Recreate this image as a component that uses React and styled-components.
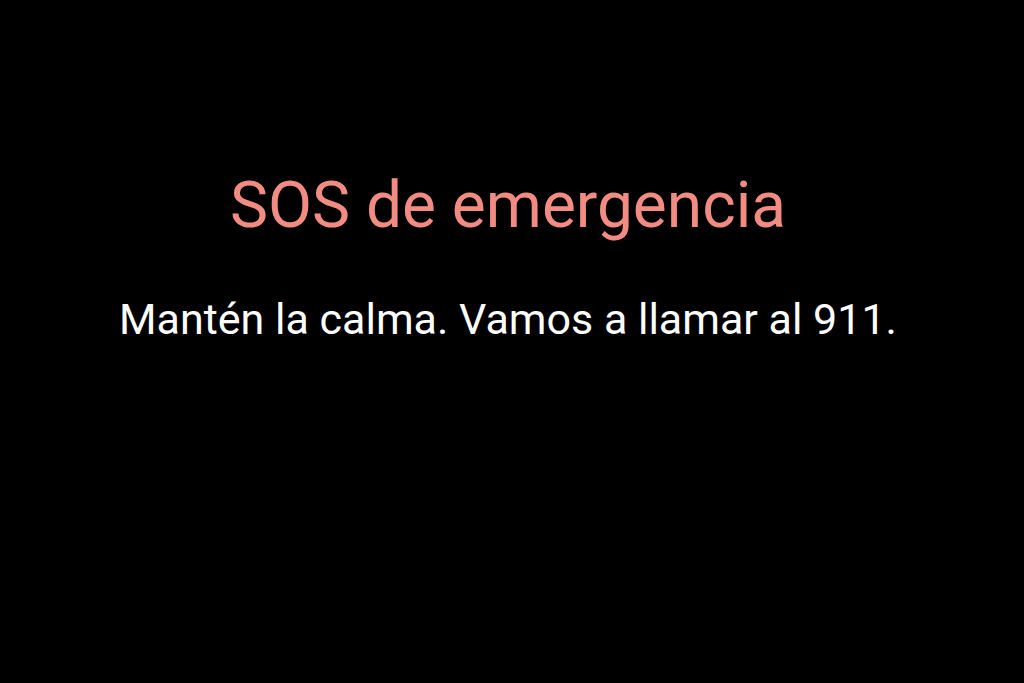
import React from 'react';
import styled, { createGlobalStyle } from 'styled-components';

const GlobalStyle = createGlobalStyle`
  html, body {
    margin: 0;
    padding: 0;
    background: #000;
  }
`

const Screen = styled.div`
  width: 1024px;
  height: 683px;
  background: #000;
  display: flex;
  flex-direction: column;
  align-items: center;
  padding: 168px 8px 0 0;
  box-sizing: border-box;
  font-family: Roboto, "Noto Sans", sans-serif;
`

const Title = styled.h1`
  margin: 0;
  font-size: 64px;
  font-weight: 400;
  line-height: 76px;
  color: #f28b82;
`

const Message = styled.p`
  margin: 47px 0 0;
  font-size: 43px;
  font-weight: 400;
  line-height: 56px;
  color: #fff;
`

export default function App() {
  return (
    <>
      <GlobalStyle />
      <Screen>
        <Title>SOS de emergencia</Title>
        <Message>Mantén la calma. Vamos a llamar al 911.</Message>
      </Screen>
    </>
  );
}
